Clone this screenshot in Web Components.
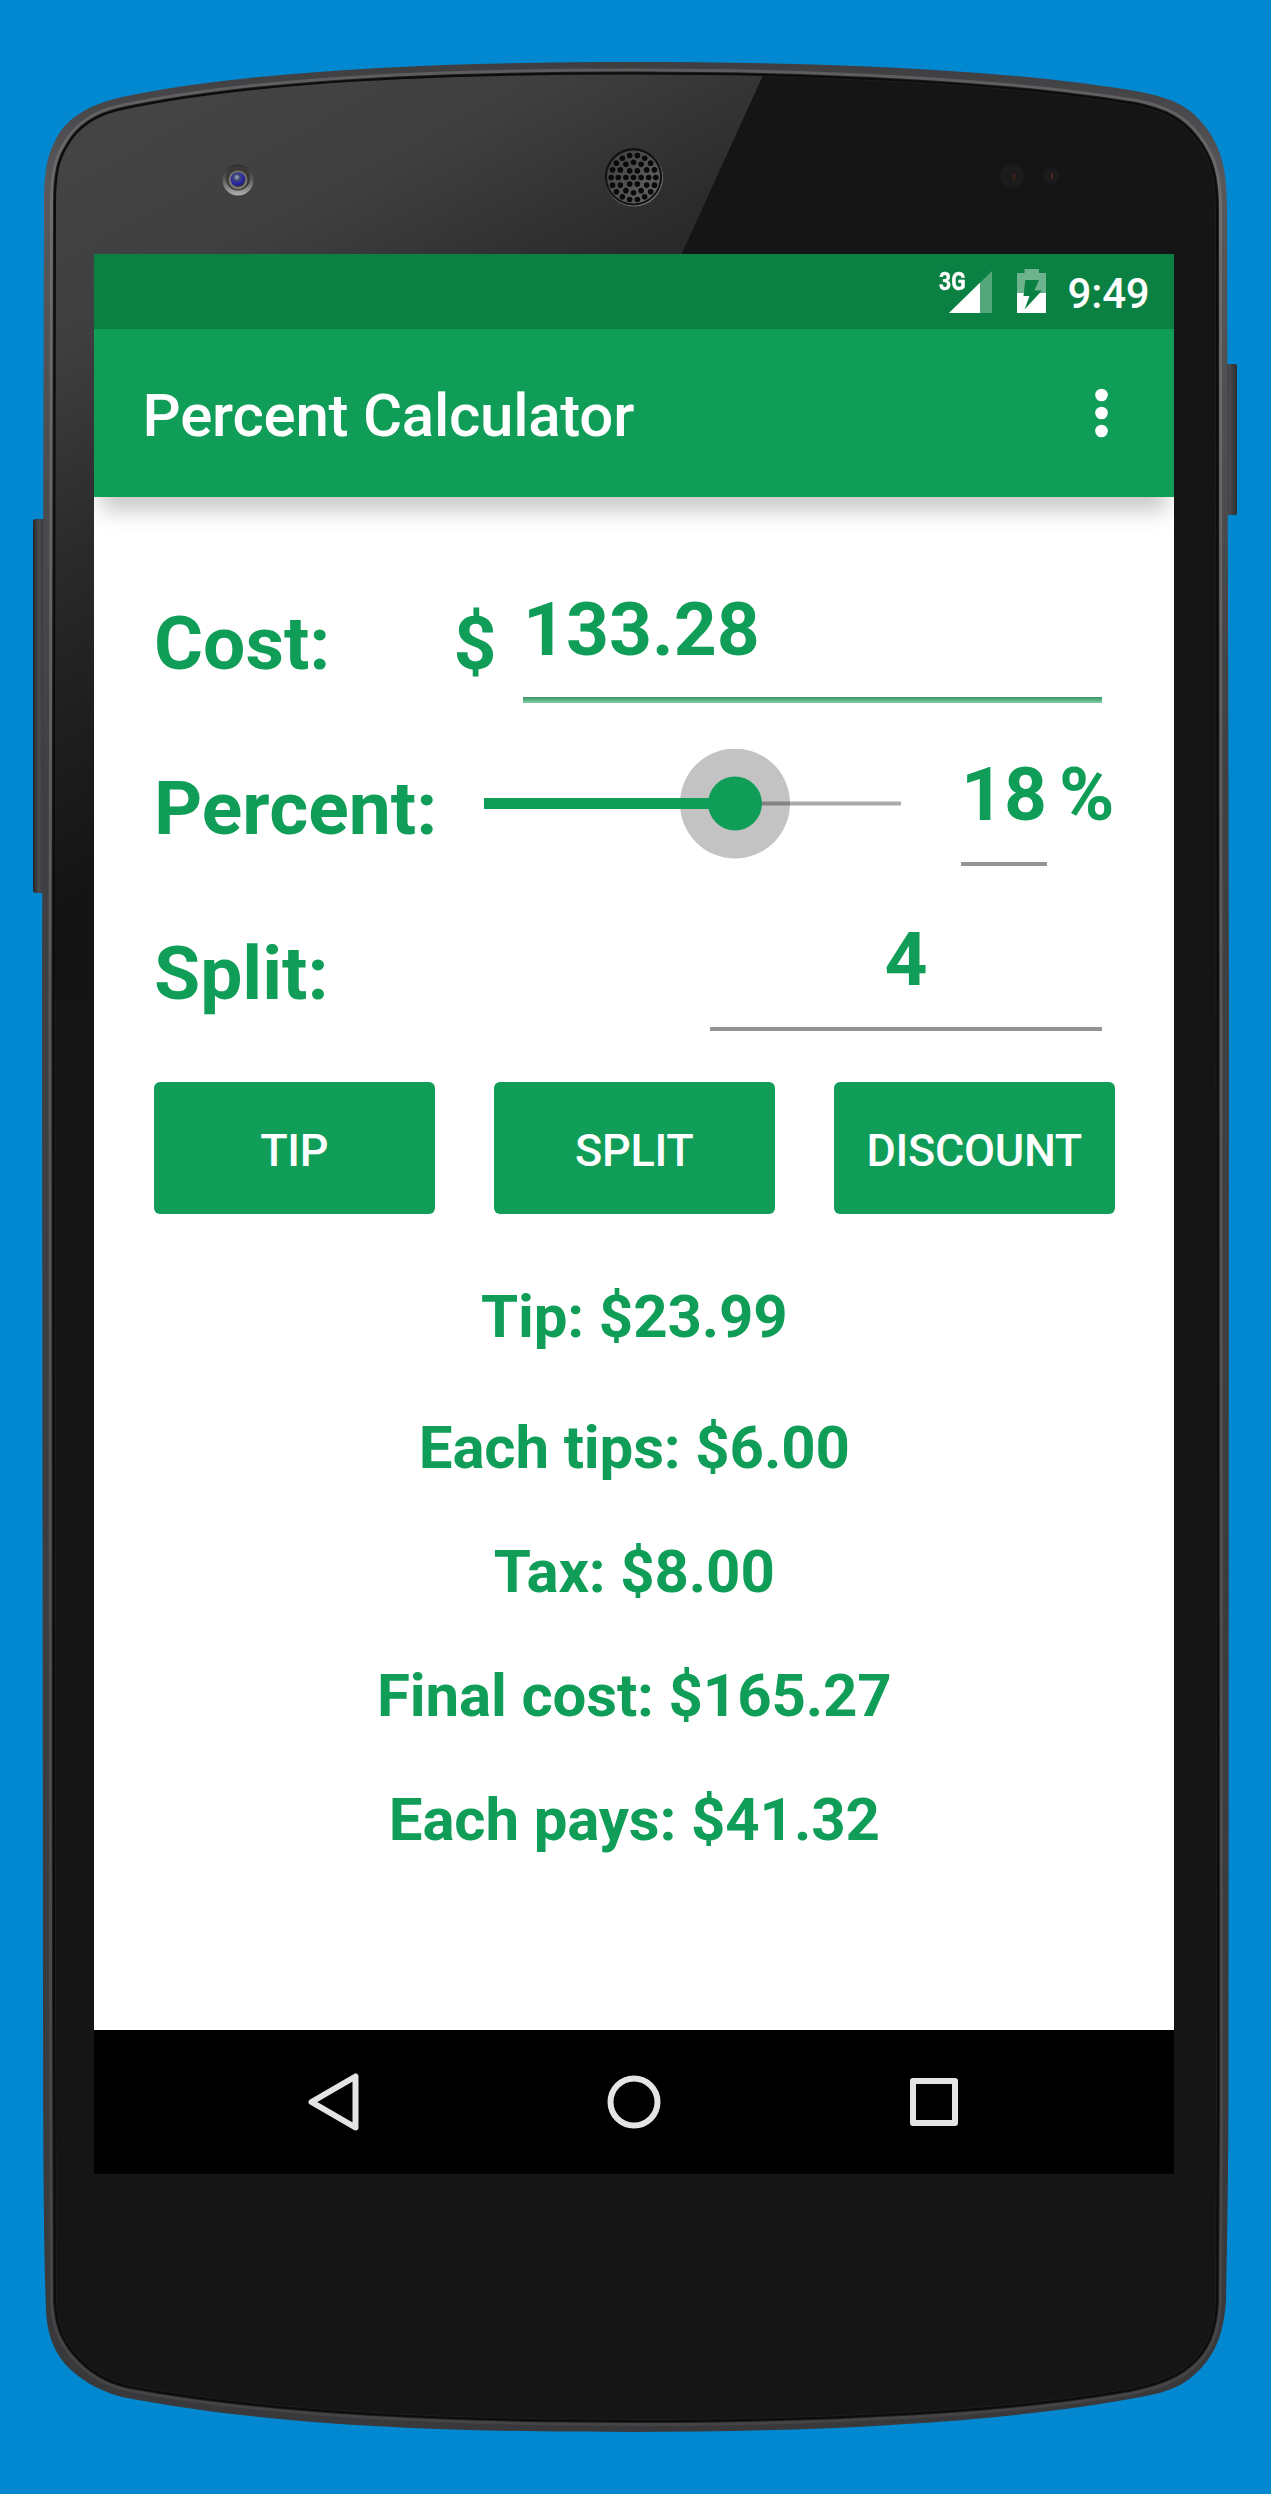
<!DOCTYPE html>
<html lang="en">
<head>
<meta charset="utf-8">
<title>Percent Calculator</title>
<style>
html,body{margin:0;background:#0288d1}
body{font-family:Roboto,"Noto Sans",sans-serif;width:1271px;height:2494px;overflow:hidden}
</style>
</head>
<body>
<phone-frame>
  <status-bar time="9:49" network="3G"></status-bar>
  <app-bar>Percent Calculator</app-bar>
  <calc-form>
    <field-row label="Cost:">
      <span slot="lead">$</span>
      <line-field active style="width:579px">133.28</line-field>
    </field-row>
    <field-row label="Percent:">
      <value-slider slot="lead"></value-slider>
      <line-field style="width:86px" suffix="%">18</line-field>
    </field-row>
    <field-row label="Split:">
      <line-field center style="width:392px">4</line-field>
    </field-row>
    <div slot="actions"><flat-button>TIP</flat-button><flat-button>SPLIT</flat-button><flat-button>DISCOUNT</flat-button></div>
    <result-line slot="results" style="padding-bottom:6.5px">Tip: $23.99</result-line>
    <result-line slot="results">Each tips: $6.00</result-line>
    <result-line slot="results">Tax: $8.00</result-line>
    <result-line slot="results">Final cost: $165.27</result-line>
    <result-line slot="results">Each pays: $41.32</result-line>
  </calc-form>
  <nav-bar></nav-bar>
</phone-frame>
<script>
const define = (name, html, setup) => customElements.define(name, class extends HTMLElement {
  constructor() {
    super();
    this.attachShadow({ mode: 'open' }).innerHTML = html;
  }
  connectedCallback() { if (setup) setup(this, this.shadowRoot); }
});

const OUTER = 'M44 205 C44 176 46 158 55 141 C66 118 88 105 122 97 C260 69 450 62 634 62 C820 62 1010 69 1141 92 C1172 98 1190 107 1204 125 C1222 148 1227 170 1227 210 L1229 1000 L1228.5 2100 C1228 2200 1227 2250 1226 2300 C1224 2335 1214 2358 1193 2376 C1180 2387 1167 2392 1141 2397 C1010 2422 820 2432 634 2432 C450 2432 270 2426 122 2397 C96 2390 78 2378 65 2364 C52 2348 47 2332 46 2310 C44 2250 43 2150 43 2000 L42 1000 Z';
const INNER = 'M55 205 C55 176 58 160 67 146 C78 126 98 114 122 109 C260 80 450 73.500 634 73.500 C820 73.500 1010 83 1136 104 C1165 110 1182 119 1196 137 C1212 157 1217 177 1217 210 L1217.500 1000 L1218 2100 L1217 2300 C1216 2332 1207 2352 1188 2367 C1176 2377 1160 2384 1130 2390 C1010 2412 820 2421 634 2421 C450 2421 270 2413 130 2387 C104 2382 88 2370 75 2355 C62 2340 56 2325 55 2300 L54 2000 L53.500 1000 Z';

define('phone-frame', `
<style>
:host{display:grid;width:1271px;height:2494px}
svg,.screen{grid-area:1/1}
svg{display:block}
.screen{margin:254px 97px 320px 94px;display:flex;flex-direction:column;width:1080px;height:1920px;background:#fff;z-index:1}
</style>
<svg width="1271" height="2494" viewBox="0 0 1271 2494">
  <defs>
    <linearGradient id="side" x1="0" x2="1"><stop offset="0" stop-color="#242426"/><stop offset=".4" stop-color="#4c4c4e"/><stop offset="1" stop-color="#2c2c2e"/></linearGradient>
    <linearGradient id="edge" gradientUnits="userSpaceOnUse" x1="0" y1="62" x2="0" y2="2432"><stop offset="0" stop-color="#3e3e40"/><stop offset=".05" stop-color="#59595b"/><stop offset=".3" stop-color="#404042"/><stop offset="1" stop-color="#39393b"/></linearGradient>
    <linearGradient id="rim" gradientUnits="userSpaceOnUse" x1="0" y1="62" x2="0" y2="2432"><stop offset="0" stop-color="#5c5c5f"/><stop offset=".06" stop-color="#6e6e71"/><stop offset=".4" stop-color="#58585a"/><stop offset="1" stop-color="#444446"/></linearGradient>
    <linearGradient id="glare" gradientUnits="userSpaceOnUse" x1="0" y1="0" x2="390" y2="730"><stop offset=".2" stop-color="#444"/><stop offset=".4" stop-color="#3f3f3f"/><stop offset=".62" stop-color="#2b2b2b"/><stop offset=".78" stop-color="#202020"/><stop offset="1" stop-color="#141414"/></linearGradient>
    <linearGradient id="ring" x1="0" y1="0" x2="0" y2="1"><stop offset="0" stop-color="#2c2c2c"/><stop offset=".5" stop-color="#5c5c5c"/><stop offset="1" stop-color="#b0b0b0"/></linearGradient>
    <radialGradient id="lens" cx=".42" cy=".35" r=".65"><stop offset="0" stop-color="#a7b4c8"/><stop offset=".35" stop-color="#3e4474"/><stop offset=".7" stop-color="#2a24b0"/><stop offset="1" stop-color="#282440"/></radialGradient>
    <linearGradient id="mesh" x1="0" y1="0" x2="1" y2="1"><stop offset="0" stop-color="#3c3c3c"/><stop offset="1" stop-color="#666"/></linearGradient>
    <clipPath id="face"><path d="${INNER}"/></clipPath>
  </defs>
  <rect x="33" y="519" width="14" height="374" rx="3" fill="url(#side)"/>
  <rect x="1224" y="364" width="13" height="151" rx="2" fill="url(#side)"/>
  <path d="${OUTER}" fill="url(#edge)"/>
  <path d="${INNER}" fill="none" stroke="url(#rim)" stroke-width="10"/>
  <path d="${INNER}" fill="#151515" stroke="#1e1e1f" stroke-width="4"/>
  <g clip-path="url(#face)"><path d="M0 50H774.500L342 1000H0Z" fill="url(#glare)"/></g>
  <path d="${INNER}" fill="none" stroke="#0c0c0c" stroke-width="2"/>
  <circle cx="238" cy="180" r="15.500" fill="url(#ring)"/>
  <circle cx="238" cy="178.500" r="12" fill="#3a3936"/>
  <circle cx="238" cy="180" r="9.500" fill="#77746f"/>
  <circle cx="238" cy="179.500" r="7.300" fill="url(#lens)"/>
  <g id="speaker"><circle cx="634" cy="177.500" r="29" fill="#777"/><circle cx="633.500" cy="176.800" r="28.700" fill="#111"/><circle cx="633.500" cy="177" r="26.500" fill="url(#mesh)"/></g>
  <circle cx="1012" cy="176" r="12" fill="#1c1b1b"/><ellipse cx="1014" cy="177" rx="1.500" ry="4" fill="#3a221a"/>
  <circle cx="1051" cy="176" r="8" fill="#1c1b1b"/><ellipse cx="1052" cy="176" rx="1.300" ry="3" fill="#4a2a20"/>
</svg>
<div class="screen"><slot></slot></div>`, (host, root) => {
  const g = root.getElementById('speaker');
  let dots = '';
  [[0, 1], [7.6, 6], [15.2, 12], [22.3, 18]].forEach(([r, n]) => {
    for (let i = 0; i < n; i++) {
      const a = i / n * Math.PI * 2;
      dots += `<circle cx="${633.5 + r * Math.cos(a)}" cy="${177.5 + r * Math.sin(a)}" r="2.8" fill="#090909"/>`;
    }
  });
  g.insertAdjacentHTML('beforeend', dots);
});

define('status-bar', `
<style>
:host{display:flex;justify-content:flex-end;height:75px;background:#0b8043;color:#fff;box-sizing:border-box;padding-right:24.500px}
.net{font-weight:700;font-size:26.500px;line-height:30px;margin-top:11.500px;width:10px;white-space:nowrap}
.net span{display:inline-block;transform:scaleX(.8);transform-origin:0 0;-webkit-text-stroke:.4px #fff}
.signal{margin:17px 25px 0 0}
.battery{margin:15px 22px 0 0}
.time{font-size:42px;font-weight:500;line-height:50px;margin-top:15px;letter-spacing:-.2px}
svg{display:block;flex:none}
</style>
<div class="net"><span></span></div>
<svg class="signal" width="43" height="42" viewBox="0 0 43 42"><path d="M43 0V42H0Z" fill="#fff" opacity=".3"/><path d="M31 11.700V42H0Z" fill="#fff"/></svg>
<svg class="battery" width="29" height="44" viewBox="0 0 29 44"><defs><mask id="bolt"><path d="M0 0H29V44H0Z" fill="#fff"/><path d="M8.300 11H22L17.300 21.500H25L7.500 40.500L12.500 27H6.500Z" fill="#000"/></mask></defs><g mask="url(#bolt)" fill="#fff"><path d="M0 4H7.500V0H22V4H29V24H0Z" opacity=".4"/><path d="M0 24H29V44H0Z"/></g></svg>
<div class="time"></div>`, (host, root) => {
  root.querySelector('.net span').textContent = host.getAttribute('network');
  root.querySelector('.time').textContent = host.getAttribute('time');
});

define('app-bar', `
<style>
:host{display:flex;justify-content:space-between;align-items:center;height:168px;box-sizing:border-box;padding:5px 66px 0 48.500px;background:#0f9d58;color:#fff;font-size:60px;font-weight:500;line-height:80px;letter-spacing:-.25px;box-shadow:0 21px 20px -7px rgba(0,0,0,.21);position:relative;z-index:1;clip-path:inset(0 0 -40px 0)}
svg{display:block;margin-top:-4.500px}
</style>
<span><slot></slot></span>
<svg width="13" height="50" viewBox="0 0 13 50" fill="#fff"><circle cx="6.500" cy="7" r="6.300"/><circle cx="6.500" cy="25" r="6.300"/><circle cx="6.500" cy="43" r="6.300"/></svg>`);

define('calc-form', `
<style>
:host{display:flex;flex-direction:column;flex:1;box-sizing:border-box;padding:88px 59.500px 0 60px;color:#0f9d58}
::slotted(div){display:flex;justify-content:space-between;margin-top:1.500px}
.results{display:flex;flex-direction:column;align-items:center;margin-top:68.500px}
</style>
<slot></slot><slot name="actions"></slot><div class="results"><slot name="results"></slot></div>`);

define('field-row', `
<style>
:host{display:flex;align-items:flex-start;justify-content:space-between;height:165px;font-size:75px;font-weight:700;line-height:88px;padding-right:12.500px}
:host([label="Percent:"]){padding-right:0}
.label{margin-top:14px;white-space:nowrap}
.lead{margin-left:auto;margin-top:14px;margin-right:26.500px}
:host([label="Percent:"]) .lead{margin:-1px 60px 0 auto}
</style>
<div class="label"></div><div class="lead"><slot name="lead"></slot></div><slot></slot>`, (host, root) => {
  root.querySelector('.label').textContent = host.getAttribute('label');
});

define('line-field', `
<style>
:host{display:flex;flex-direction:column;position:relative;flex:none}
:host([suffix]){margin-right:67.500px}
.value{height:112px;box-sizing:border-box;white-space:nowrap;display:flex}
:host([center]) .value{justify-content:center}
.line{height:4px;background:#949494}
:host([active]) .line{height:6px;background:linear-gradient(#3f8f68,#4fae7d 40%,#8bcdab)}
.suffix{margin-left:12px}
</style>
<div class="value"><slot></slot><span class="suffix"></span></div><div class="line"></div>`, (host, root) => {
  const s = root.querySelector('.suffix');
  if (host.hasAttribute('suffix')) s.textContent = host.getAttribute('suffix'); else s.remove();
});

define('value-slider', `
<style>:host,svg{display:block}</style>
<svg width="417" height="110" viewBox="0 0 417 110"><path d="M250 54.500H417" stroke="#aaa" stroke-width="4"/><circle cx="251" cy="54.500" r="55" fill="#c3c3c3"/><path d="M251 54.500H306" stroke="#838383" stroke-width="4"/><path d="M0 54.500H251" stroke="#0f9d58" stroke-width="11"/><circle cx="251" cy="54.500" r="27" fill="#0f9d58"/></svg>`);

define('flat-button', `
<style>:host{display:flex;align-items:center;justify-content:center;width:280.500px;height:132px;box-sizing:border-box;padding-top:5px;border-radius:6px;background:#0f9d58;color:#fff;font-size:45px;font-weight:500;letter-spacing:-.3px}</style><slot></slot>`);

define('result-line', `
<style>:host{display:block;height:124px;font-size:60px;font-weight:700;line-height:70px;letter-spacing:-.15px;white-space:nowrap}</style><slot></slot>`);

define('nav-bar', `
<style>:host{display:flex;justify-content:space-around;align-items:center;height:144px;background:#000;padding:0 90px}svg{display:block}</style>
<svg width="60" height="60" viewBox="0 0 60 60" fill="none" stroke="#e4e4e4" stroke-width="6" stroke-linejoin="round"><path d="M51.500 4.500V55.500L7.500 30Z"/></svg>
<svg width="60" height="60" viewBox="0 0 60 60" fill="none" stroke="#e4e4e4" stroke-width="6"><circle cx="30" cy="30" r="23.500"/></svg>
<svg width="60" height="60" viewBox="0 0 60 60" fill="none" stroke="#e4e4e4" stroke-width="6" stroke-linejoin="round"><path d="M9 9H51V51H9Z"/></svg>`);
</script>
</body>
</html>
